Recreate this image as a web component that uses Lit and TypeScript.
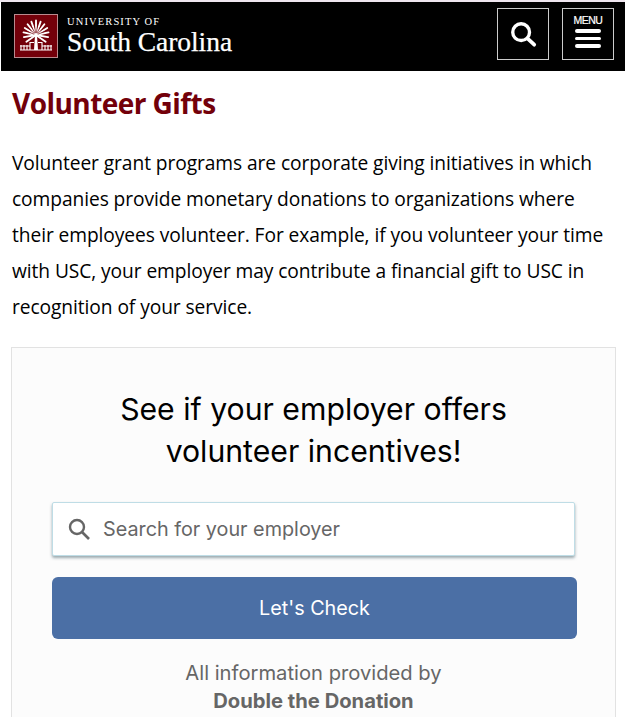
import { LitElement, html, css, svg } from "lit";
import { customElement } from "lit/decorators.js";

const fronds = [-125,-100,-78,-58,-38,-19,0,19,38,58,78,100,125].map(a => {
  const tip = 21 - (14.5 - Math.abs(a) / 45);
  return svg`<path d="M22 21 L22 ${tip}" transform="rotate(${a} 22 21)" stroke="#fff" stroke-width="1.9" stroke-linecap="round"/>`;
});
const inner = [-68,-48,-28,-9,9,28,48,68].map(a => svg`<path d="M22 19 L22 12" transform="rotate(${a} 22 21)" stroke="#73000a" stroke-width=".6"/>`);

@customElement("app-root")
export class AppRoot extends LitElement {
  static styles = css`
    :host { display: block; height: 717px; overflow: hidden; background: #fff; font-family: "Open Sans", "Noto Sans", sans-serif; }
    .top { height: 2px; background: #efe6ef; }
    .bar { display: flex; align-items: center; justify-content: space-between; height: 69px; box-sizing: border-box; margin-left: 1px; background: #000; padding: 0 11px 5px 13px; }
    .brand { display: flex; align-items: center; gap: 9px; margin-top: 3px; }
    .seal { width: 44px; height: 44px; display: block; }
    .word { display: flex; flex-direction: column; color: #fff; font-family: "Liberation Serif", serif; }
    .uni { font-size: 10.5px; letter-spacing: 1.12px; line-height: 12px; }
    .sc { font-size: 27.5px; line-height: 27px; letter-spacing: -0.05px; -webkit-text-stroke: .25px #fff; }
    .btns { display: flex; gap: 13px; }
    .btn { width: 52px; height: 52px; border: 1px solid #ccc; display: flex; flex-direction: column; align-items: center; justify-content: center; box-sizing: border-box; color: #fff; }
    .btn.find svg { display: block; margin: -1px 1px 0 0; }
    .btn.nav { padding-bottom: 4px; }
    .menu { font-family: "Liberation Sans", sans-serif; font-size: 10.5px; line-height: 10px; letter-spacing: -0.5px; margin: -1px 0 4px; -webkit-text-stroke: .2px #fff; }
    .lines { display: flex; flex-direction: column; gap: 4px; }
    .lines i { display: block; width: 26px; height: 3.5px; border-radius: 2px; background: #fff; }
    main { padding: 0 9px 0 11px; }
    h1 { margin: 13px 0 0 1px; font-size: 28px; line-height: 38px; font-weight: 700; color: #73000a; letter-spacing: -0.55px; }
    p { margin: 23px 0 0 1px; font-size: 19.2px; line-height: 36px; color: #000; letter-spacing: -0.08px; }
    .card { margin-top: 22px; border: 1px solid #e2e2e2; background: #fcfcfc; padding: 40px 38px 0 40px; height: 400px; font-family: Inter, sans-serif; text-align: center; }
    h2 { margin: 0 2px 0 0; font-size: 30.2px; line-height: 42px; font-weight: 400; color: #000; }
    .search { margin: 30px 2px 0 0; height: 54px; box-sizing: border-box; display: flex; align-items: center; gap: 12px; padding-left: 14px; background: #fff; border: 1px solid #bfdde6; border-radius: 2px; box-shadow: 0 2px 3px rgba(60,90,100,.5); color: #666; font-size: 19.8px; }
    .search svg { display: block; }
    .go { margin-top: 21px; height: 62px; display: flex; align-items: center; justify-content: center; background: #4b6fa5; border-radius: 6px; color: #fff; font-size: 19.8px; }
    .info { margin: 20px 2px 0 0; color: #666; font-size: 20.2px; line-height: 28px; }
    .info b { display: block; font-weight: 700; }
  `;

  render() {
    return html`
      <div class="top"></div>
      <header class="bar">
        <div class="brand">
          <svg class="seal" viewBox="0 0 44 44">
            <rect x=".5" y=".5" width="43" height="43" fill="#73000a" stroke="#b98a8e"/>
            ${fronds}${inner}
            <path d="M21 21h2l1 15h-4z" fill="#fff"/>
            <path d="M6 36h32M7 31v5M10 31v5M13 31v5M16 28v8M28 28v8M31 31v5M34 31v5M37 31v5" stroke="#fff" stroke-width="1.1"/>
            <path d="M6 32h10M28 32h10M16 28.500h4M24 28.500h4" stroke="#fff"/>
          </svg>
          <div class="word"><span class="uni">UNIVERSITY OF</span><span class="sc">South Carolina</span></div>
        </div>
        <div class="btns">
          <div class="btn find">
            <svg width="28" height="28" viewBox="0 0 30 30" fill="none" stroke="#fff">
              <circle cx="13" cy="13" r="9" stroke-width="3.6"/>
              <path d="M20 20l7 6.5" stroke-width="4" stroke-linecap="round"/>
            </svg>
          </div>
          <div class="btn nav">
            <span class="menu">MENU</span>
            <div class="lines"><i></i><i></i><i></i></div>
          </div>
        </div>
      </header>
      <main>
        <h1>Volunteer Gifts</h1>
        <p>Volunteer grant programs are corporate giving initiatives in which companies provide monetary donations to organizations where their employees volunteer. For example, if you volunteer your time with USC, your employer may contribute a financial gift to USC in recognition of your service.</p>
        <section class="card">
          <h2>See if your employer offers<br />volunteer incentives!</h2>
          <div class="search">
            <svg width="24" height="24" viewBox="0 0 24 24" fill="none" stroke="#666">
              <circle cx="10" cy="10" r="7" stroke-width="2.4"/>
              <path d="M15 15l7 7" stroke-width="2.6"/>
            </svg>
            <span>Search for your employer</span>
          </div>
          <div class="go">Let's Check</div>
          <div class="info">All information provided by<b>Double the Donation</b></div>
        </section>
      </main>
    `;
  }
}
